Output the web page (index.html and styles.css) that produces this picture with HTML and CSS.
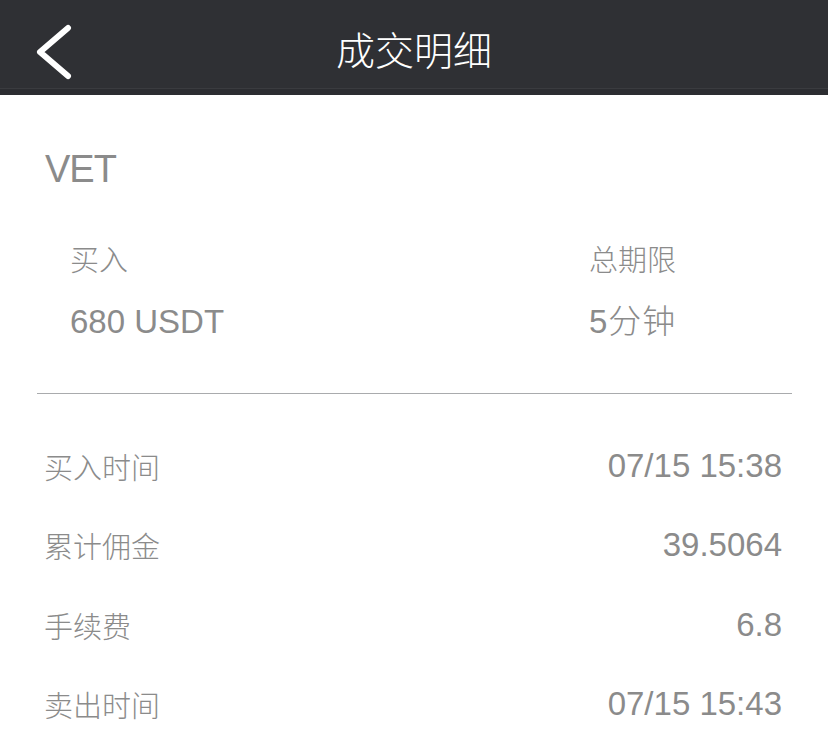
FILE: index.html
```html
<!DOCTYPE html>
<html lang="zh">
<head>
  <meta charset="UTF-8" />
  <meta name="viewport" content="width=device-width, initial-scale=1.0"/>
  <title>成交明细</title>
  <link rel="stylesheet" href="styles.css">
</head>
<body>
  <div class="navbar">
    <a class="back" href="#">
      <svg width="40" height="56" viewBox="0 0 40 56">
        <polyline points="33,4 5,28 33,52" fill="none" stroke="#fff" stroke-width="6" stroke-linecap="round" stroke-linejoin="round"/>
      </svg>
    </a>
    <h1>成交明细</h1>
    <span></span>
  </div>

  <div class="container">
    <div class="symbol">VET</div>

    <div class="summary">
      <div class="col">
        <div class="label">买入</div>
        <div class="value">680 USDT</div>
      </div>
      <div class="col col-right">
        <div class="label">总期限</div>
        <div class="value">5分钟</div>
      </div>
    </div>

    <div class="divider"></div>

    <div class="rows">
      <div class="row"><span class="row-label">买入时间</span><span class="row-value">07/15 15:38</span></div>
      <div class="row"><span class="row-label">累计佣金</span><span class="row-value">39.5064</span></div>
      <div class="row"><span class="row-label">手续费</span><span class="row-value">6.8</span></div>
      <div class="row"><span class="row-label">卖出时间</span><span class="row-value">07/15 15:43</span></div>
    </div>
  </div>
</body>
</html>
```

FILE: styles.css
```css
body {
  margin: 0;
  background: #fff;
  font-family: 'Liberation Sans', 'Noto Sans CJK SC', sans-serif;
  font-weight: 300;
  color: #8b8b8b;
}

.navbar {
  display: grid;
  grid-template-columns: 95px 1fr 95px;
  height: 95px;
  padding-top: 8px;
  box-sizing: border-box;
  background: linear-gradient(#2f3034 88px, #3a3b3f 88px, #3a3b3f 89px, #2c2d31 89px);
}

.back {
  display: flex;
  align-items: center;
  padding-left: 35px;
}

.back svg {
  display: block;
}

.navbar h1 {
  margin: 0;
  text-align: center;
  color: #fff;
  font-size: 39px;
  font-weight: 300;
  line-height: 87px;
}

.container {
  padding: 50px 36px 0 36px;
}

.symbol {
  padding-left: 9px;
  font-size: 38px;
  line-height: 48px;
  letter-spacing: -1px;
}

.summary {
  display: flex;
  padding-left: 34px;
  margin-top: 48px;
}

.col {
  flex: 1;
}

.col-right {
  flex: none;
  width: 203px;
}

.label {
  font-size: 29px;
  line-height: 40px;
}

.value {
  margin-top: 19px;
  font-size: 33px;
  line-height: 44px;
}

.col-right .value {
  letter-spacing: 1px;
}

.divider {
  margin-top: 49px;
  margin-left: 1px;
  height: 1px;
  background: #a9abad;
}

.rows {
  padding: 32px 10px 0 8px;
}

.row {
  display: flex;
  justify-content: space-between;
  align-items: center;
  height: 79.5px;
}

.row-label {
  font-size: 29px;
}

.row-value {
  font-size: 33px;
}
```
